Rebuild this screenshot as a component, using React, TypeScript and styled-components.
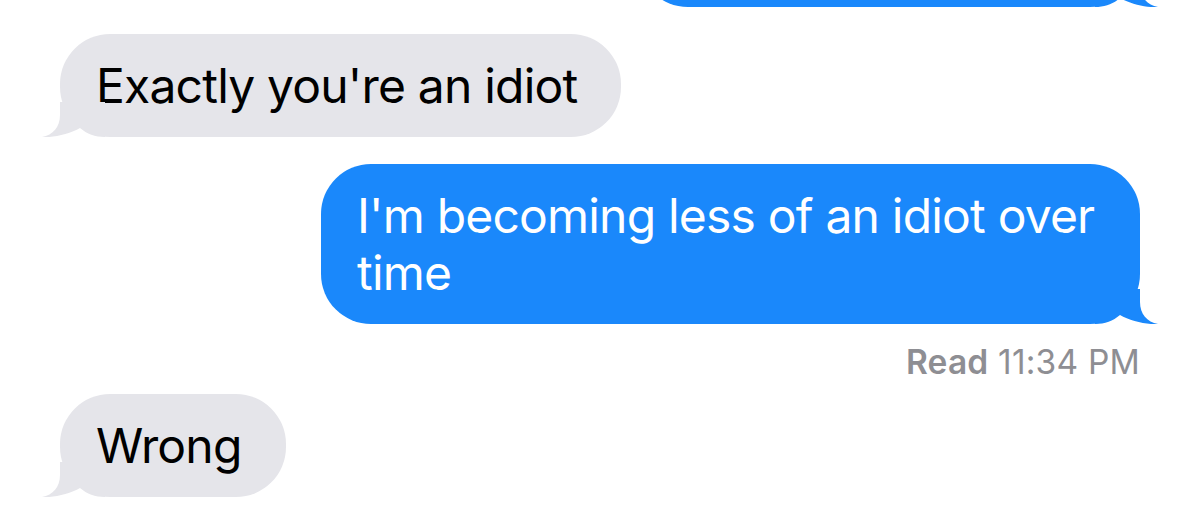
import React from "react";
import styled, { createGlobalStyle } from "styled-components";

const GlobalStyle = createGlobalStyle`
  html, body {
    margin: 0;
    padding: 0;
    background: #ffffff;
    overflow: hidden;
  }
  body {
    font-family: Inter, "Noto Sans", "Liberation Sans", sans-serif;
  }
`;

type Side = "me" | "them";

interface IMessage {
  id: number;
  from: Side;
  text: string;
  receipt?: string;
}

const messages: IMessage[] = [
  { id: 1, from: "me", text: "You're acting weird" },
  { id: 2, from: "them", text: "Exactly you're an idiot" },
  {
    id: 3,
    from: "me",
    text: "I'm becoming less of an idiot over time",
    receipt: "11:34 PM",
  },
  { id: 4, from: "them", text: "Wrong" },
];

const BLUE = "#1a88fb";
const GRAY = "#e5e5ea";

function Tail({ from }: { from: Side }) {
  return (
    <StTail $from={from} viewBox="0 0 68 35" width="68" height="35">
      <path
        d="M5 0 L50 0 L50 13 C50 25 57 33 68 35 C58 36 40 32 30 26 C23 32 15 35 5 35 Z"
        fill={from === "me" ? BLUE : GRAY}
      />
    </StTail>
  );
}

function App() {
  return (
    <>
      <GlobalStyle />
      <StThread>
        {messages.map((msg, i) => (
          <React.Fragment key={msg.id}>
            <StBubble $from={msg.from} $first={i === 0}>
              {msg.text}
              <Tail from={msg.from} />
            </StBubble>
            {msg.receipt && (
              <StReceipt>
                <b>Read</b> {msg.receipt}
              </StReceipt>
            )}
          </React.Fragment>
        ))}
      </StThread>
    </>
  );
}

export default App;

const StThread = styled.div`
  display: flex;
  flex-direction: column;
  padding: 0 60px;
  width: 1200px;
  height: 506px;
  box-sizing: border-box;
`;

const StBubble = styled.div<{ $from: Side; $first: boolean }>`
  position: relative;
  box-sizing: border-box;
  max-width: 819px;
  padding: 23px 44px 23px 36px;
  border-radius: 50px;
  font-size: 48px;
  line-height: 57px;
  letter-spacing: -0.8px;
  align-self: ${(p) => (p.$from === "me" ? "flex-end" : "flex-start")};
  background: ${(p) => (p.$from === "me" ? BLUE : GRAY)};
  color: ${(p) => (p.$from === "me" ? "#ffffff" : "#000000")};
  margin-top: ${(p) => (p.$first ? "-96px" : "27px")};
`;

const StTail = styled.svg<{ $from: Side }>`
  position: absolute;
  bottom: 0;
  ${(p) =>
    p.$from === "me"
      ? "right: -18px;"
      : "left: -18px; transform: scaleX(-1);"}
`;

const StReceipt = styled.div`
  align-self: flex-end;
  margin-top: 18px;
  margin-bottom: -15px;
  font-size: 33.5px;
  line-height: 40px;
  color: #8e8e93;
  letter-spacing: 0.2px;

  b {
    font-weight: 600;
  }
`;
